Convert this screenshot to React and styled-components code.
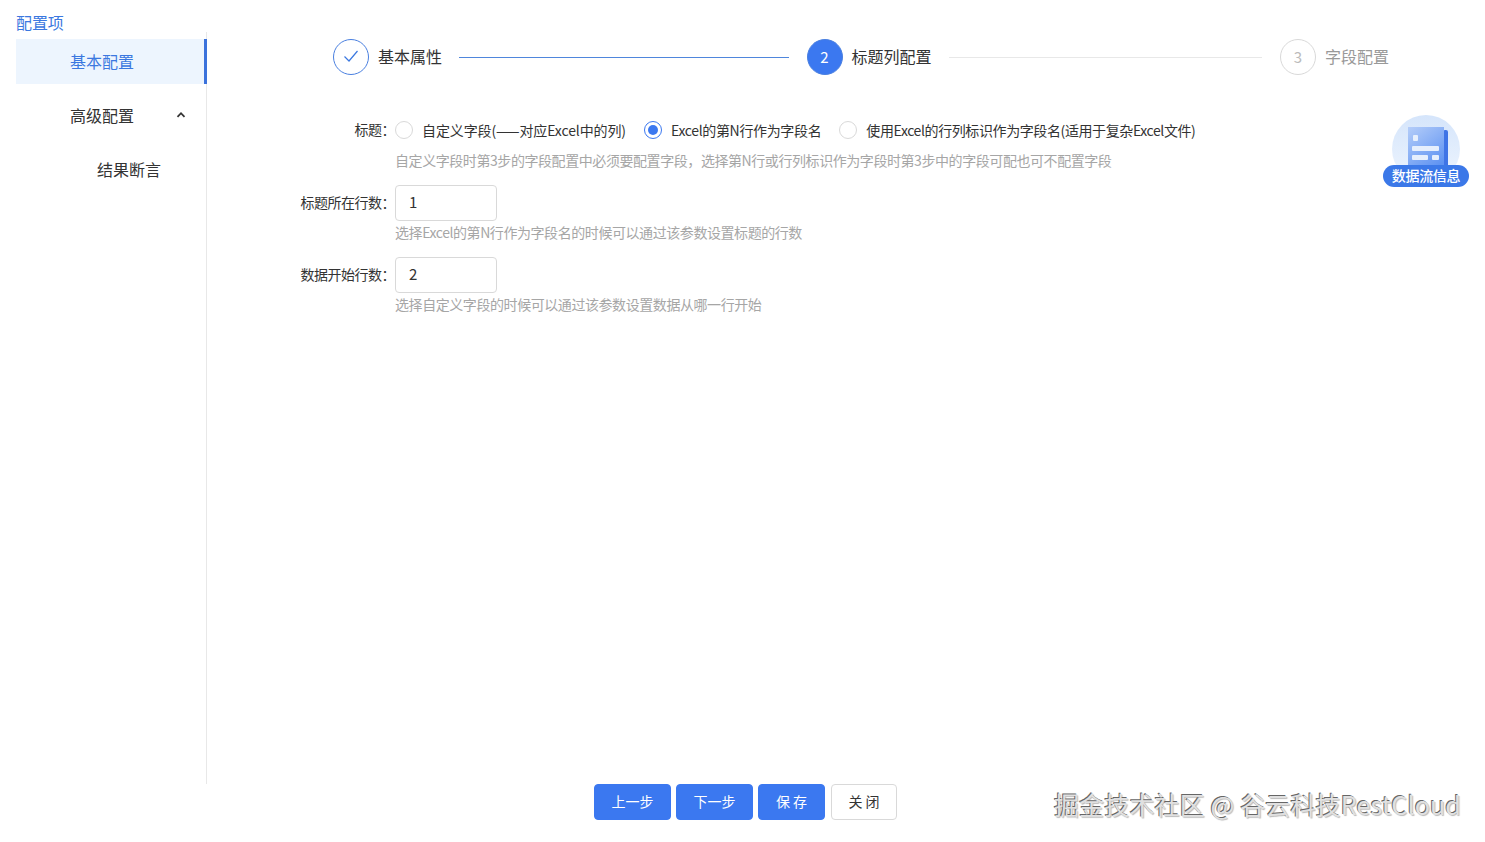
import React, { useState } from 'react';
import styled, { createGlobalStyle } from 'styled-components';

const GlobalStyle = createGlobalStyle`
  html, body {
    margin: 0;
    padding: 0;
    background: #fff;
  }
  body {
    font-family: "Noto Sans CJK SC", "Noto Sans", sans-serif;
    color: #333;
  }
`;

const Page = styled.div`
  position: relative;
  display: flex;
  flex-direction: column;
  height: 842px;
  overflow: hidden;
`;

const Body = styled.div`
  display: flex;
  height: 784px;
`;

const Sidebar = styled.aside`
  display: flex;
  flex-direction: column;
  width: 207px;
  flex-shrink: 0;
`;

const SidebarTitle = styled.div`
  height: 32px;
  padding: 13px 0 0 16px;
  box-sizing: border-box;
  font-size: 16px;
  line-height: 18px;
  letter-spacing: -0.1px;
  color: #3b78e0;
`;

const Menu = styled.ul`
  flex: 1;
  list-style: none;
  margin: 0 0 0 16px;
  padding: 7px 0 0;
  border-right: 1px solid #e8e8e8;
`;

const MenuItem = styled.li`
  position: relative;
  display: flex;
  align-items: center;
  box-sizing: border-box;
  height: 45px;
  margin-bottom: 9px;
  margin-right: -1px;
  padding: 0 0 2px ${props => (props.$sub ? '81px' : '54px')};
  font-size: 16px;
  color: ${props => (props.$active ? '#3b78e0' : '#333')};
  background: ${props => (props.$active ? '#edf5fe' : 'transparent')};
  border-right: ${props => (props.$active ? '3px solid #3b72dc' : 'none')};
`;

const Chevron = styled.svg`
  position: absolute;
  left: 160px;
  top: 17px;
  width: 10px;
  height: 10px;
`;

const Content = styled.main`
  flex: 1;
  min-width: 0;
`;

const Steps = styled.div`
  display: flex;
  align-items: center;
  padding: 39px 96px 0 126px;
`;

const Step = styled.div`
  display: flex;
  align-items: center;
  flex: ${props => (props.$last ? '0 0 auto' : '1')};
  height: 36px;
`;

const StepIcon = styled.div`
  display: flex;
  align-items: center;
  justify-content: center;
  width: 36px;
  height: 36px;
  box-sizing: border-box;
  flex-shrink: 0;
  padding-bottom: 2px;
  border-radius: 50%;
  font-size: 15px;
  border: 1px solid ${props =>
    props.$state === 'wait' ? '#d9d9d9' : '#4a80e0'};
  color: ${props =>
    props.$state === 'active' ? '#fff' : props.$state === 'wait' ? '#bbb' : '#3b78e0'};
  background: ${props => (props.$state === 'active' ? '#3b78f0' : '#fff')};
`;

const StepTitle = styled.div`
  margin: 0 0 2px 9px;
  font-size: 16px;
  white-space: nowrap;
  color: ${props => (props.$state === 'wait' ? '#999' : '#333')};
`;

const StepLine = styled.div`
  flex: 1;
  height: 1px;
  margin: 0 18px 0 17px;
  background: ${props => (props.$done ? '#4f86dc' : '#e8e8e8')};
`;

const Form = styled.div`
  padding-top: 39px;
`;

const FormRow = styled.div`
  display: grid;
  grid-template-columns: 188px 1fr;
  margin-bottom: 12px;
`;

const Label = styled.div`
  display: flex;
  align-items: center;
  justify-content: flex-end;
  box-sizing: border-box;
  height: ${props => props.$height || '36px'};
  padding-bottom: 2px;
  font-size: 14px;
  letter-spacing: -0.5px;
  color: #333;
  white-space: nowrap;
`;

const RadioGroup = styled.div`
  display: flex;
  align-items: center;
  height: 32px;
`;

const RadioOption = styled.label`
  display: flex;
  align-items: center;
  margin-right: ${props => props.$gap};
  cursor: pointer;
`;

const RadioText = styled.span`
  margin-bottom: 1px;
  font-size: 14px;
  letter-spacing: ${props => props.$spacing};
  color: #333;
  white-space: nowrap;
`;

const RadioDot = styled.span`
  position: relative;
  display: block;
  width: 18px;
  height: 18px;
  box-sizing: border-box;
  flex-shrink: 0;
  margin-right: ${props => props.$gap};
  border-radius: 50%;
  border: 1px solid ${props => (props.$checked ? '#3b78f0' : '#d9d9d9')};
  &::after {
    content: '';
    display: ${props => (props.$checked ? 'block' : 'none')};
    position: absolute;
    left: 3px;
    top: 3px;
    width: 10px;
    height: 10px;
    border-radius: 50%;
    background: #3b78f0;
  }
`;

const Help = styled.div`
  height: 24px;
  margin-top: ${props => props.$top || '0'};
  font-size: 14px;
  line-height: 22px;
  letter-spacing: -0.43px;
  color: #a6a6a6;
  white-space: nowrap;
`;

const Input = styled.input`
  display: block;
  width: 102px;
  height: 36px;
  box-sizing: border-box;
  padding: 0 13px 3px;
  border: 1px solid #d9d9d9;
  border-radius: 4px;
  outline: none;
  font-family: inherit;
  font-size: 15px;
  color: #333;
`;

const Footer = styled.div`
  display: flex;
  justify-content: center;
  gap: 5px;
  padding-left: 6px;
`;

const Button = styled.button`
  width: ${props => props.$width};
  height: 36px;
  margin-left: ${props => (props.$primary ? '0' : '1px')};
  padding: 0 0 2px;
  border-radius: 4px;
  border: 1px solid ${props => (props.$primary ? '#3b78f0' : '#d9d9d9')};
  background: ${props => (props.$primary ? '#3b78f0' : '#fff')};
  color: ${props => (props.$primary ? '#fff' : '#333')};
  font-family: inherit;
  font-size: 14px;
  white-space: pre;
  cursor: pointer;
`;

const FlowWidget = styled.div`
  position: absolute;
  left: 1383px;
  top: 114px;
  width: 86px;
  height: 73px;
`;

const FlowBadge = styled.div`
  position: absolute;
  left: 0;
  bottom: 0;
  width: 86px;
  height: 22px;
  border-radius: 11px;
  background: #3b78e8;
  color: #fff;
  font-size: 14px;
  font-weight: 500;
  line-height: 21px;
  letter-spacing: -0.3px;
  text-align: center;
  white-space: nowrap;
`;

const Watermark = styled.div`
  position: absolute;
  right: 24px;
  bottom: 21px;
  font-size: 25px;
  line-height: 34px;
  letter-spacing: 0.15px;
  color: #e0e0e0;
  text-shadow: -1px -1px 0 #666, 1px 1px 1px #bbb;
  white-space: nowrap;
  pointer-events: none;
`;

const steps = [
  { title: '基本属性', state: 'done' },
  { title: '标题列配置', state: 'active', icon: '2' },
  { title: '字段配置', state: 'wait', icon: '3' },
];

const titleOptions = [
  { value: 'custom', label: '自定义字段(——对应Excel中的列)', gap: '18px', dotGap: '9px', spacing: '-0.11px' },
  { value: 'row', label: 'Excel的第N行作为字段名', gap: '18px', dotGap: '9px', spacing: '-0.34px' },
  { value: 'cell', label: '使用Excel的行列标识作为字段名(适用于复杂Excel文件)', gap: '0', dotGap: '9px', spacing: '-0.4px' },
];

const CheckIcon = () => (
  <svg width="16" height="16" viewBox="0 0 16 16" fill="none" stroke="#3b78e0" strokeWidth="1.2">
    <path d="M1.5 8.5 L6 13 L14.5 3" />
  </svg>
);

const FlowIcon = () => (
  <svg width="86" height="73" viewBox="0 0 86 73">
    <defs>
      <linearGradient id="flowBg" x1="0" y1="0" x2="0" y2="1">
        <stop offset="0" stopColor="#d5e5fb" />
        <stop offset="1" stopColor="#eef5fe" />
      </linearGradient>
      <linearGradient id="flowDoc" x1="0" y1="0" x2="0.6" y2="1">
        <stop offset="0" stopColor="#b4cdf9" />
        <stop offset="1" stopColor="#5f93f2" />
      </linearGradient>
    </defs>
    <circle cx="43" cy="35" r="34" fill="url(#flowBg)" />
    <rect x="60" y="16" width="5" height="40" rx="2" fill="#3f74e6" />
    <rect x="25" y="13" width="36" height="46" fill="url(#flowDoc)" />
    <rect x="30" y="21" width="5" height="6" rx="1" fill="#e6effd" />
    <rect x="29" y="32" width="27" height="5" rx="1" fill="#e6effd" />
    <rect x="29" y="41" width="16" height="5" rx="1" fill="#e6effd" />
    <rect x="49" y="41" width="7" height="5" rx="1" fill="#e6effd" />
  </svg>
);

const App = () => {
  const [titleMode, setTitleMode] = useState('row');
  const [titleRow, setTitleRow] = useState('1');
  const [dataRow, setDataRow] = useState('2');

  return (
    <Page>
      <GlobalStyle />
      <Body>
        <Sidebar>
          <SidebarTitle>配置项</SidebarTitle>
          <Menu>
            <MenuItem $active>基本配置</MenuItem>
            <MenuItem>
              高级配置
              <Chevron viewBox="0 0 10 10" fill="none" stroke="#333" strokeWidth="1.8">
                <path d="M1.5 6.8 L5 3.2 L8.5 6.8" />
              </Chevron>
            </MenuItem>
            <MenuItem $sub>结果断言</MenuItem>
          </Menu>
        </Sidebar>
        <Content>
          <Steps>
            {steps.map((step, i) => (
              <Step key={step.title} $last={i === steps.length - 1}>
                <StepIcon $state={step.state}>
                  {step.state === 'done' ? <CheckIcon /> : step.icon}
                </StepIcon>
                <StepTitle $state={step.state}>{step.title}</StepTitle>
                {i < steps.length - 1 && <StepLine $done={step.state === 'done'} />}
              </Step>
            ))}
          </Steps>
          <Form>
            <FormRow>
              <Label $height="32px">标题：</Label>
              <div>
                <RadioGroup>
                  {titleOptions.map(opt => (
                    <RadioOption key={opt.value} $gap={opt.gap} onClick={() => setTitleMode(opt.value)}>
                      <RadioDot $checked={titleMode === opt.value} $gap={opt.dotGap} />
                      <RadioText $spacing={opt.spacing}>{opt.label}</RadioText>
                    </RadioOption>
                  ))}
                </RadioGroup>
                <Help $top="3px">自定义字段时第3步的字段配置中必须要配置字段，选择第N行或行列标识作为字段时第3步中的字段可配也可不配置字段</Help>
              </div>
            </FormRow>
            <FormRow>
              <Label>标题所在行数：</Label>
              <div>
                <Input value={titleRow} onChange={e => setTitleRow(e.target.value)} />
                <Help>选择Excel的第N行作为字段名的时候可以通过该参数设置标题的行数</Help>
              </div>
            </FormRow>
            <FormRow>
              <Label>数据开始行数：</Label>
              <div>
                <Input value={dataRow} onChange={e => setDataRow(e.target.value)} />
                <Help>选择自定义字段的时候可以通过该参数设置数据从哪一行开始</Help>
              </div>
            </FormRow>
          </Form>
        </Content>
      </Body>
      <Footer>
        <Button $primary $width="77px">上一步</Button>
        <Button $primary $width="77px">下一步</Button>
        <Button $primary $width="67px">保 存</Button>
        <Button $width="66px">关 闭</Button>
      </Footer>
      <FlowWidget>
        <FlowIcon />
        <FlowBadge>数据流信息</FlowBadge>
      </FlowWidget>
      <Watermark>掘金技术社区 @ 谷云科技RestCloud</Watermark>
    </Page>
  );
};

export default App;
